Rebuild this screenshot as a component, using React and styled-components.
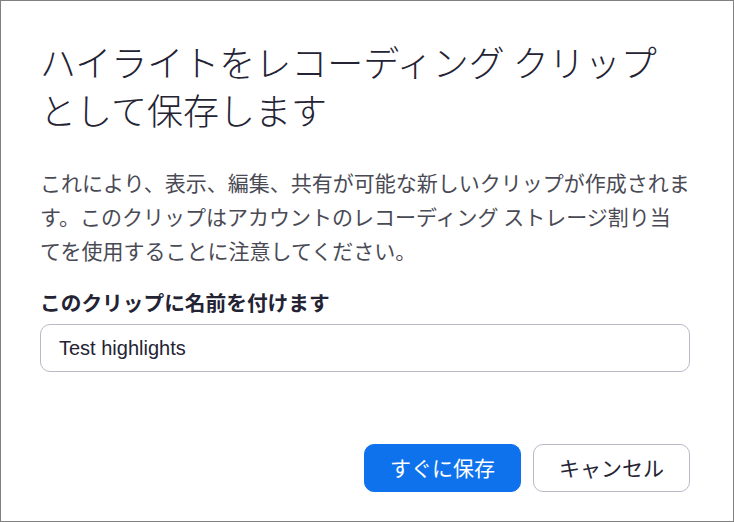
import React, { useState } from 'react';
import styled, { createGlobalStyle } from 'styled-components';

const GlobalStyle = createGlobalStyle`
    html, body {
        margin: 0;
        padding: 0;
        background: #ffffff;
    }
    body {
        font-family: "Noto Sans CJK JP", "Noto Sans", sans-serif;
    }
    * {
        box-sizing: border-box;
    }
`;

const SaveClipDialog = () => {
    const [clipName, setClipName] = useState('Test highlights');

    return (
        <Dialog>
            <Title>ハイライトをレコーディング クリップとして保存します</Title>
            <Description>
                これにより、表示、編集、共有が可能な新しいクリップが作成されます。このクリップはアカウントのレコーディング ストレージ割り当てを使用することに注意してください。
            </Description>
            <FieldLabel htmlFor="clipName">このクリップに名前を付けます</FieldLabel>
            <NameInput
                id="clipName"
                type="text"
                value={clipName}
                onChange={(e) => setClipName(e.target.value)}
            />
            <Footer>
                <Button $primary>すぐに保存</Button>
                <Button>キャンセル</Button>
            </Footer>
        </Dialog>
    );
};

const Dialog = styled.div`
    display: flex;
    flex-direction: column;
    width: 734px;
    height: 522px;
    border: 1px solid #808080;
    padding: 36px 43px 29px 39px;
    background: #ffffff;
`;

const Title = styled.h1`
    margin: 0;
    font-size: 36px;
    line-height: 48px;
    font-weight: 300;
    color: #232333;
`;

const Description = styled.p`
    margin: 32px 0 0;
    font-size: 21px;
    line-height: 34px;
    font-weight: 400;
    color: #4a4a55;
`;

const FieldLabel = styled.label`
    display: block;
    margin-top: 21px;
    font-size: 20.7px;
    line-height: 28px;
    font-weight: 700;
    color: #232333;
`;

const NameInput = styled.input`
    display: block;
    width: 100%;
    height: 48px;
    margin-top: 8px;
    padding: 0 18px;
    border: 1px solid #bab9c8;
    border-radius: 10px;
    font-family: "Liberation Sans", Arial, sans-serif;
    font-size: 20px;
    color: #232333;
    outline: none;
`;

const Footer = styled.div`
    display: flex;
    justify-content: flex-end;
    gap: 12px;
    margin-top: auto;
`;

const Button = styled.button`
    height: 48px;
    padding: 0 25px 2px;
    border-radius: 10px;
    border: 1px solid ${(p) => (p.$primary ? '#0e72ed' : '#bab9c8')};
    background: ${(p) => (p.$primary ? '#0e72ed' : '#ffffff')};
    color: ${(p) => (p.$primary ? '#ffffff' : '#232333')};
    font-family: "Noto Sans CJK JP", "Noto Sans", sans-serif;
    font-size: 21px;
    font-weight: 400;
    cursor: pointer;
`;

export default function App() {
    return (
        <>
            <GlobalStyle />
            <SaveClipDialog />
        </>
    );
}
